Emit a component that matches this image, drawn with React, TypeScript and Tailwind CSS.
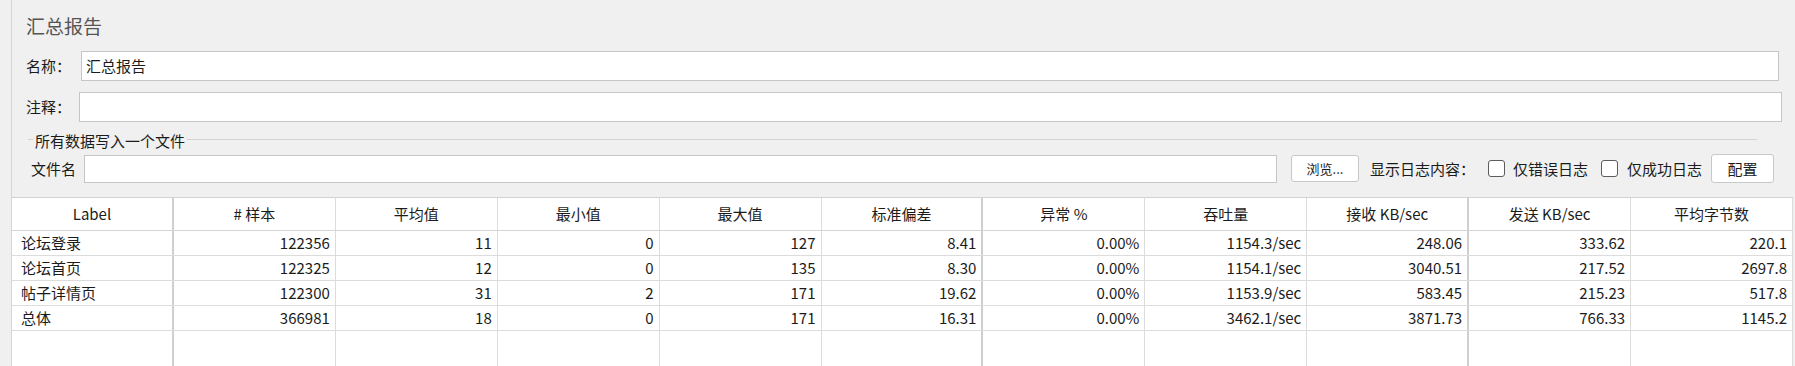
const COLUMNS = ['Label', '# 样本', '平均值', '最小值', '最大值', '标准偏差', '异常 %', '吞吐量', '接收 KB/sec', '发送 KB/sec', '平均字节数']

const ROWS = [
  ['论坛登录', '122356', '11', '0', '127', '8.41', '0.00%', '1154.3/sec', '248.06', '333.62', '220.1'],
  ['论坛首页', '122325', '12', '0', '135', '8.30', '0.00%', '1154.1/sec', '3040.51', '217.52', '2697.8'],
  ['帖子详情页', '122300', '31', '2', '171', '19.62', '0.00%', '1153.9/sec', '583.45', '215.23', '517.8'],
  ['总体', '366981', '18', '0', '171', '16.31', '0.00%', '3462.1/sec', '3871.73', '766.33', '1145.2'],
]

// a few column separators are drawn heavier in the original
function edge(i: number) {
  return i === 0 || i === 5 || i === 8 ? 'border-r-2 border-r-[#cfcfcf]' : 'border-r border-r-[#dcdcdc]'
}

function Checkbox() {
  return <span className="block size-[17px] shrink-0 rounded-[3px] border border-[#5c5c5c] bg-white" />
}

export default function App() {
  return (
    <div className="flex h-[366px] w-[1795px] overflow-hidden bg-[#f0f0f0] font-['Noto_Sans_CJK_SC',sans-serif] text-[15px] leading-[20px] text-[#1b1b1b]">
      <div className="w-[11px] shrink-0" />
      <div className="flex min-w-0 flex-1 flex-col border-l border-[#d6d6d6]">
        <div className="pl-[14px] pt-[13px]">
          <h1 className="text-[19px] leading-[26px] font-normal text-[#555]">汇总报告</h1>

          <div className="mt-[12px] flex h-[30px] items-center">
            <span className="w-[55px] shrink-0">名称：</span>
            <div className="flex h-[30px] w-[1698px] items-center border border-[#c6c6c6] bg-white pl-[4px]">汇总报告</div>
          </div>

          <div className="mt-[11px] flex h-[30px] items-center">
            <span className="w-[53px] shrink-0">注释：</span>
            <div className="h-[30px] w-[1703px] border border-[#c6c6c6] bg-white" />
          </div>

          <div className="mt-[9px] ml-[2px] flex h-[20px] w-[1729px] items-center">
            <div className="mb-[4px] h-px w-[5px] bg-[#d3d3d3]" />
            <span className="px-[2px]">所有数据写入一个文件</span>
            <div className="mb-[4px] h-px flex-1 bg-[#d3d3d3]" />
          </div>

          <div className="mt-[3px] ml-[5px] flex h-[29px] items-center">
            <span className="w-[53px] shrink-0">文件名</span>
            <div className="h-[28px] w-[1193px] border border-[#c6c6c6] bg-white" />
            <button className="ml-[14px] flex h-[27px] w-[68px] items-center justify-center rounded-[3px] border border-[#c8c8c8] bg-white text-[13px]">浏览...</button>
            <span className="ml-[11px] w-[118px] shrink-0">显示日志内容：</span>
            <Checkbox />
            <span className="ml-[8px] w-[88px] shrink-0">仅错误日志</span>
            <Checkbox />
            <span className="ml-[9px] w-[84px] shrink-0">仅成功日志</span>
            <button className="flex h-[29px] w-[63px] items-center justify-center rounded-[3px] border border-[#c8c8c8] bg-white">配置</button>
          </div>
        </div>

        <div className="mt-[14px] w-[1781px] border-t border-[#d2d2d2] bg-white">
          <div className="grid h-[33px] grid-cols-11 border-b border-[#d6d6d6]">
            {COLUMNS.map((c, i) => (
              <div key={c} className={`flex items-center justify-center ${edge(i)}`}>{c}</div>
            ))}
          </div>
          {ROWS.map((row) => (
            <div key={row[0]} className="grid h-[25px] grid-cols-11 border-b border-[#dcdcdc]">
              {row.map((v, i) => (
                <div key={i} className={`flex items-center ${i === 0 ? 'pl-[9px]' : 'justify-end pr-[5px]'} ${edge(i)}`}>{v}</div>
              ))}
            </div>
          ))}
          <div className="grid h-[60px] grid-cols-11">
            {COLUMNS.map((c, i) => <div key={c} className={edge(i)} />)}
          </div>
        </div>
      </div>
    </div>
  )
}
